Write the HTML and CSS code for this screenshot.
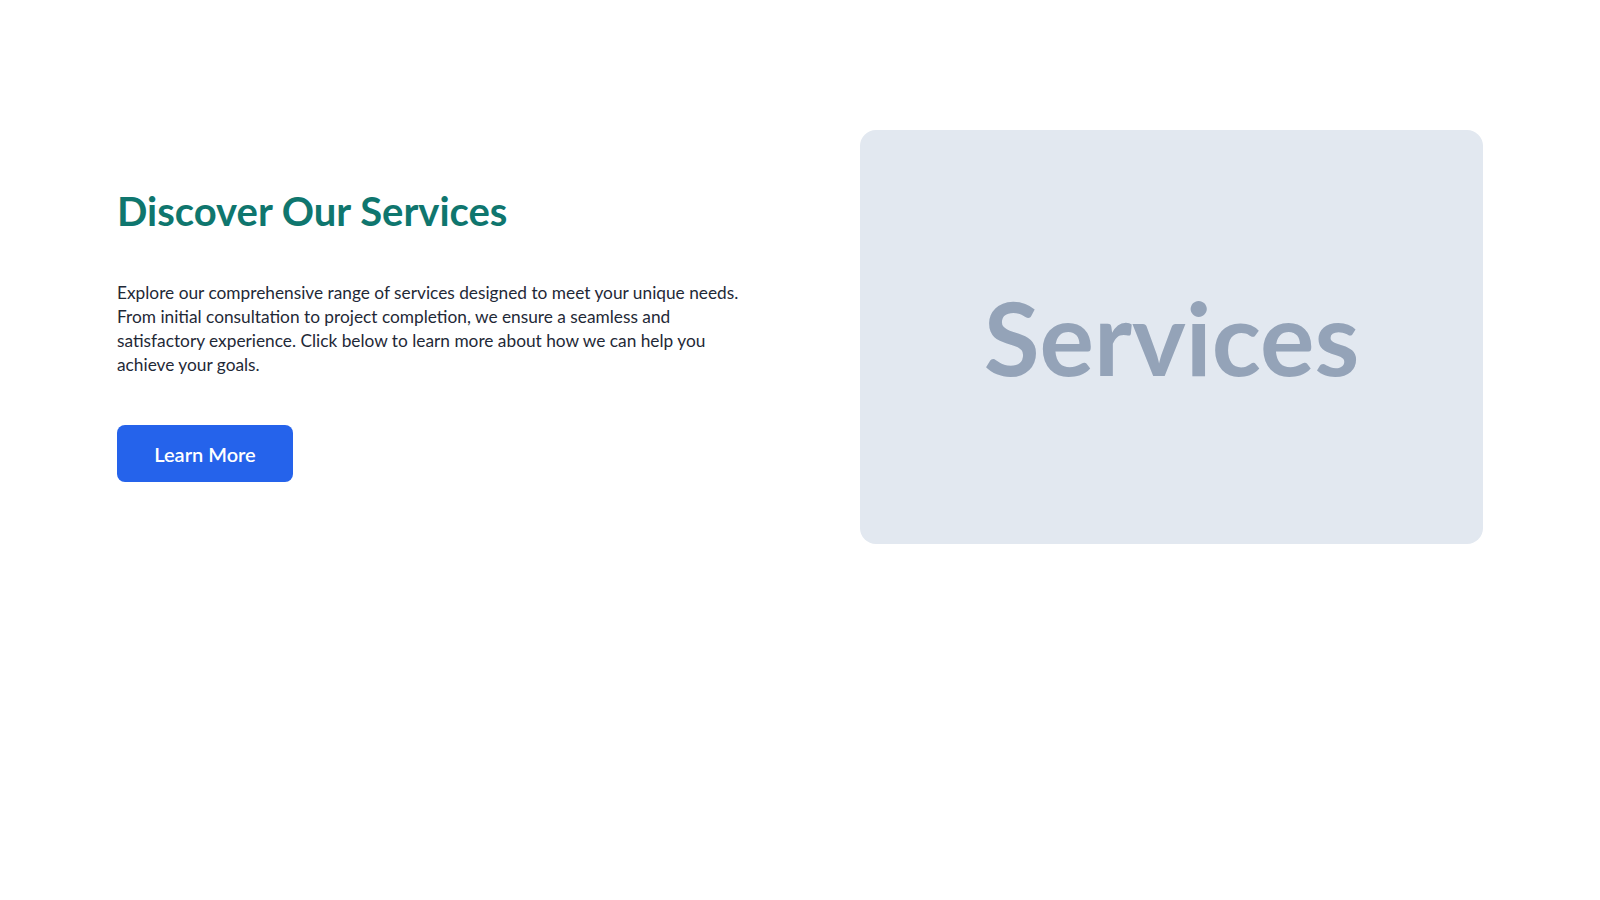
FILE: index.html
```html
<!DOCTYPE html>
<html lang="en">
<head>
<meta charset="utf-8">
<title>Discover Our Services</title>
<link rel="stylesheet" href="styles.css">
</head>
<body>
<main class="page">
  <section class="hero">
    <div class="hero-text">
      <h1 class="hero-title">Discover Our Services</h1>
      <p class="hero-desc">Explore our comprehensive range of services designed to meet your unique needs. From initial consultation to project completion, we ensure a seamless and satisfactory experience. Click below to learn more about how we can help you achieve your goals.</p>
      <a class="hero-btn" href="#">Learn More</a>
    </div>
    <div class="hero-media">
      <span class="media-label">Services</span>
    </div>
  </section>
</main>
</body>
</html>
```

FILE: styles.css
```css
* { box-sizing: border-box; }
html, body { margin: 0; padding: 0; background: #ffffff; }
body {
  font-family: "Lato", "Noto Sans", sans-serif;
  color: #1f2937;
}
.page {
  height: 900px;
  padding: 130px 117px 0 117px;
}
.hero {
  display: grid;
  grid-template-columns: 1fr 1fr;
  column-gap: 120px;
  align-items: center;
}
.hero-text {
  display: flex;
  flex-direction: column;
  align-items: flex-start;
  padding-bottom: 5px;
}
.hero-title {
  margin: 0;
  font-size: 40px;
  line-height: 48px;
  font-weight: 700;
  color: #0f766e;
  letter-spacing: 0;
}
.hero-desc {
  margin: 46px 0 0 0;
  font-size: 17.3px;
  line-height: 24px;
  color: #1f2937;
}
.hero-btn {
  margin-top: 48px;
  display: inline-flex;
  align-items: center;
  justify-content: center;
  width: 176px;
  height: 57px;
  background: #2563eb;
  color: #ffffff;
  border-radius: 8px;
  font-size: 20px;
  font-weight: 600;
  text-decoration: none;
}
.hero-media {
  width: 100%;
  height: 414px;
  background: #e2e8f0;
  border-radius: 16px;
  display: flex;
  align-items: center;
  justify-content: center;
}
.media-label {
  font-family: "Lato", sans-serif;
  font-weight: 700;
  font-size: 102px;
  color: #94a3b8;
  line-height: 1;
}
```
